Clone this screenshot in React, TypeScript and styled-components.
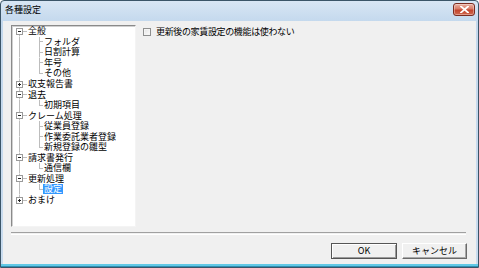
import React from 'react'
import styled, { createGlobalStyle } from 'styled-components'

const GlobalStyle = createGlobalStyle`
  html, body {
    margin: 0;
    padding: 0;
    background: #ffffff;
  }
  body {
    font-family: "Noto Sans CJK JP", "Noto Sans", sans-serif;
    font-size: 9px;
    color: #000;
  }
`

const ROW_H = 10.56
const LINE = '#bdbdbd'

const Window = styled.div`
  box-sizing: border-box;
  width: 479px;
  height: 268px;
  display: flex;
  flex-direction: column;
  border: 1px solid #3b5568;
  border-radius: 4px 4px 0 0;
  background: linear-gradient(#d8e6f4, #c3d8ed 8%, #c9dcef);
  padding: 0 2px 3px 2px;
  box-shadow: inset 0 -1px 0 #2f8fb3, inset 0 -3px 0 #62c9e6;
`

const TitleBar = styled.div`
  height: 21px;
  display: flex;
  align-items: flex-start;
  justify-content: space-between;
  padding: 0 1px 0 2px;
`

const Title = styled.span`
  display: inline-block;
  font-size: 9px;
  line-height: 10px;
  height: 10px;
  margin-top: 4px;
`

const CloseButton = styled.button`
  box-sizing: border-box;
  width: 22px;
  height: 13px;
  margin-top: 2px;
  padding: 0;
  border: 1px solid #7b2b20;
  border-radius: 3px;
  background: linear-gradient(#eab0a2, #d97a66 45%, #c2432c 55%, #d06a50);
  box-shadow: inset 0 0 0 1px rgba(255, 255, 255, 0.35);
  display: flex;
  align-items: center;
  justify-content: center;
`

const Client = styled.div`
  flex: 1;
  display: flex;
  flex-direction: column;
  background: #f0f0f0;
  padding: 4px 9px 5px 8px;
`

const Body = styled.div`
  display: flex;
  height: 202px;
`

const TreePanel = styled.div`
  box-sizing: border-box;
  width: 125px;
  height: 202px;
  background: #fff;
  border: 1px solid;
  border-color: #8a8a8a #f4f4f4 #f4f4f4 #8a8a8a;
  box-shadow: inset 1px 1px 0 #d0d0d0;
  overflow: hidden;
`

const Row = styled.div`
  display: flex;
  align-items: center;
  height: ${ROW_H}px;
`

const g = `linear-gradient(${LINE}, ${LINE})`

const Cell = styled.span<{ $w: number; $x: number; $up?: boolean; $down?: boolean; $h?: boolean }>`
  flex: none;
  width: ${(p) => p.$w}px;
  height: 100%;
  display: flex;
  align-items: center;
  background: ${(p) =>
    [
      p.$up ? `${g} ${p.$x}px 0 / 1px 50% no-repeat` : null,
      p.$down ? `${g} ${p.$x}px 100% / 1px 50% no-repeat` : null,
      p.$h ? `${g} ${p.$x}px 50% / ${p.$w - p.$x}px 1px no-repeat` : null,
    ]
      .filter(Boolean)
      .join(', ') || 'none'};
`

const ExpandBox = styled.span<{ $open: boolean }>`
  box-sizing: border-box;
  width: 7px;
  height: 7px;
  margin-left: 4px;
  border: 1px solid #9a9a9a;
  background: ${(p) =>
    p.$open
      ? `linear-gradient(#222, #222) 1px 2px / 3px 1px no-repeat, #fff`
      : `linear-gradient(#222, #222) 1px 2px / 3px 1px no-repeat, linear-gradient(#222, #222) 2px 1px / 1px 3px no-repeat, #fff`};
`

const Label = styled.span<{ $selected?: boolean }>`
  display: inline-block;
  font-size: 9px;
  line-height: 10px;
  height: 10px;
  padding: 0 1px;
  white-space: nowrap;
  background: ${(p) => (p.$selected ? '#3399ff' : 'transparent')};
  color: ${(p) => (p.$selected ? '#fff' : '#000')};
`

const SidePanel = styled.div`
  flex: 1;
  padding: 2px 0 0 7px;
`

const CheckRow = styled.label`
  display: flex;
  align-items: center;
  gap: 5px;
`

const CheckBox = styled.span`
  box-sizing: border-box;
  width: 8px;
  height: 8px;
  border: 1px solid #8e8f8f;
  background: linear-gradient(135deg, #e2e2e2, #fdfdfd);
  box-shadow: inset 0 0 0 1px #f4f4f4;
`

const CheckLabel = styled.span`
  display: inline-block;
  font-size: 9px;
  line-height: 10px;
  height: 10px;
  letter-spacing: -0.35px;
`

const Separator = styled.div`
  margin-top: 5px;
  height: 1px;
  border-top: 1px solid #a0a0a0;
  border-bottom: 1px solid #ffffff;
  margin-right: 1px;
`

const ButtonRow = styled.div`
  margin-top: 8px;
  display: flex;
  justify-content: flex-end;
  gap: 5px;
`

const Button = styled.button<{ $default?: boolean }>`
  box-sizing: border-box;
  width: ${(p) => (p.$default ? 66 : 65)}px;
  height: 16px;
  padding: 0;
  font-family: "Noto Sans CJK JP", "Noto Sans", sans-serif;
  font-size: 9px;
  line-height: 10px;
  color: #000;
  background: #f0f0f0;
  border: 1px solid;
  border-color: ${(p) => (p.$default ? '#555' : '#fff #6a6a6a #6a6a6a #fff')};
  box-shadow: ${(p) =>
    p.$default ? 'inset 1px 1px 0 #fff, inset -1px -1px 0 #9a9a9a' : 'inset -1px -1px 0 #a8a8a8'};
`

type Item = {
  label: string
  level: 0 | 1
  open?: boolean
  closed?: boolean
  last?: boolean
  selected?: boolean
}

const items: Item[] = [
  { label: '全般', level: 0, open: true },
  { label: 'フォルダ', level: 1 },
  { label: '日割計算', level: 1 },
  { label: '年号', level: 1 },
  { label: 'その他', level: 1, last: true },
  { label: '収支報告書', level: 0, closed: true },
  { label: '退去', level: 0, open: true },
  { label: '初期項目', level: 1, last: true },
  { label: 'クレーム処理', level: 0, open: true },
  { label: '従業員登録', level: 1 },
  { label: '作業委託業者登録', level: 1 },
  { label: '新規登録の雛型', level: 1, last: true },
  { label: '請求書発行', level: 0, open: true },
  { label: '通信欄', level: 1, last: true },
  { label: '更新処理', level: 0, open: true },
  { label: '設定', level: 1, last: true, selected: true },
  { label: 'おまけ', level: 0, closed: true },
]

const lastRoot = items.map((it) => it.level).lastIndexOf(0)

function CloseGlyph() {
  return (
    <svg width="9" height="7" viewBox="0 0 9 7">
      <path d="M1 0.5 L8 6.5 M8 0.5 L1 6.5" stroke="#fff" strokeWidth="1.8" strokeLinecap="square" />
    </svg>
  )
}

function TreeRow({ item, index }: { item: Item; index: number }) {
  if (item.level === 0) {
    return (
      <Row>
        <Cell $w={15} $x={7} $up={index > 0} $down={index < lastRoot} $h>
          {(item.open || item.closed) && <ExpandBox $open={!!item.open} />}
        </Cell>
        <Label>{item.label}</Label>
      </Row>
    )
  }
  return (
    <Row>
      <Cell $w={15} $x={7} $up={index < lastRoot} $down={index < lastRoot} />
      <Cell $w={16} $x={12} $up $down={!item.last} $h />
      <Label $selected={item.selected}>{item.label}</Label>
    </Row>
  )
}

export default function App() {
  return (
    <>
      <GlobalStyle />
      <Window>
        <TitleBar>
          <Title>各種設定</Title>
          <CloseButton aria-label="閉じる">
            <CloseGlyph />
          </CloseButton>
        </TitleBar>
        <Client>
          <Body>
            <TreePanel>
              {items.map((item, i) => (
                <TreeRow key={item.label} item={item} index={i} />
              ))}
            </TreePanel>
            <SidePanel>
              <CheckRow>
                <CheckBox />
                <CheckLabel>更新後の家賃設定の機能は使わない</CheckLabel>
              </CheckRow>
            </SidePanel>
          </Body>
          <Separator />
          <ButtonRow>
            <Button $default>OK</Button>
            <Button>キャンセル</Button>
          </ButtonRow>
        </Client>
      </Window>
    </>
  )
}
